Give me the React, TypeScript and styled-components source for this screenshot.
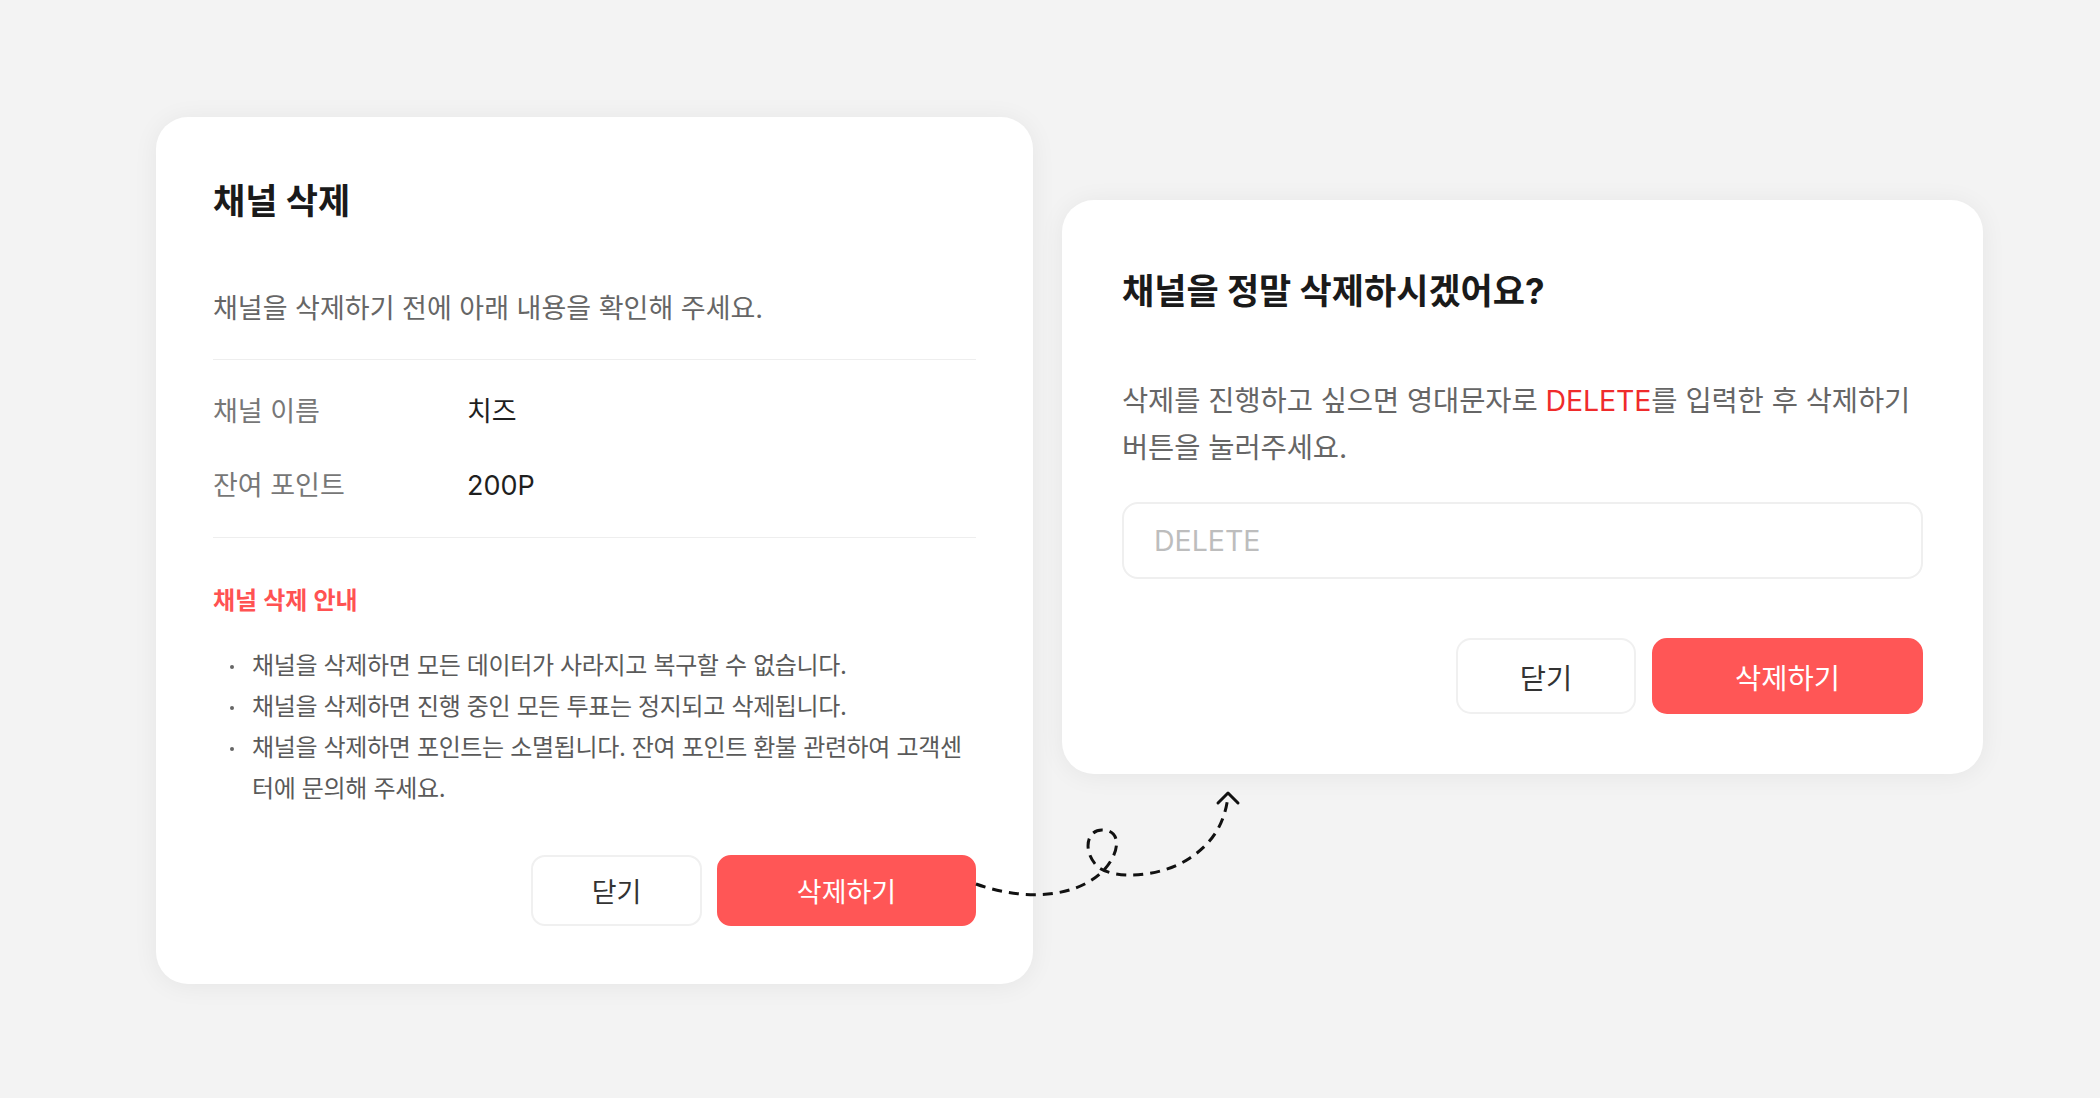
import React from 'react';
import styled, { createGlobalStyle } from 'styled-components';

const GlobalStyle = createGlobalStyle`
  html, body {
    margin: 0;
    padding: 0;
    background: #f3f3f3;
  }
  body {
    font-family: Inter, "Noto Sans CJK KR", sans-serif;
    -webkit-font-smoothing: antialiased;
  }
  * {
    box-sizing: border-box;
  }
`;

const Page = styled.div`
  position: relative;
  width: 2100px;
  height: 1098px;
  display: flex;
  align-items: flex-start;
  gap: 29px;
  padding: 117px 0 0 156px;
  overflow: hidden;
`;

const Card = styled.section<{ $width: number; $pad: string; $offset?: number }>`
  width: ${p => p.$width}px;
  margin-top: ${p => p.$offset || 0}px;
  padding: ${p => p.$pad};
  background: #fff;
  border-radius: 32px;
  box-shadow: 0 2px 26px rgba(0, 0, 0, 0.06);
  display: flex;
  flex-direction: column;
`;

const Title = styled.h2`
  margin: 0;
  font-size: 35px;
  font-weight: 700;
  line-height: 48px;
  color: #1a1a1a;
`;

const Subtitle = styled.p`
  margin: 66px 0 0;
  font-size: 27px;
  line-height: 36px;
  color: #666;
`;

const InfoList = styled.div`
  margin-top: 32px;
  padding: 34px 0 33px;
  border-top: 1px solid #eeeeee;
  border-bottom: 1px solid #eeeeee;
  display: flex;
  flex-direction: column;
  gap: 38px;
`;

const InfoRow = styled.div`
  display: grid;
  grid-template-columns: 254px 1fr;
  font-size: 27px;
  line-height: 36px;
`;

const Label = styled.span`
  color: #777;
`;

const Value = styled.span`
  color: #1f1f1f;
`;

const NoticeTitle = styled.h3`
  margin: 47px 0 0;
  font-size: 24px;
  font-weight: 600;
  line-height: 32px;
  color: #ff5252;
`;

const NoticeList = styled.ul`
  margin: 28px 0 0;
  padding: 0;
  list-style: none;
`;

const NoticeItem = styled.li`
  display: flex;
  align-items: flex-start;
  font-size: 24px;
  line-height: 41px;
  letter-spacing: -0.35px;
  color: #5a5a5a;
`;

const Dot = styled.span`
  flex: none;
  width: 4px;
  height: 4px;
  margin: 20px 18px 0 17px;
  border-radius: 50%;
  background: #666;
`;

const Body = styled.p`
  margin: 62px 0 0;
  font-size: 28.5px;
  line-height: 47px;
  letter-spacing: -0.1px;
  color: #666;
`;

const Keyword = styled.span`
  color: #ef2b2b;
`;

const Field = styled.input`
  margin-top: 31px;
  width: 100%;
  height: 77px;
  padding: 0 30px;
  border: 2px solid #efefef;
  border-radius: 16px;
  outline: none;
  font-family: inherit;
  font-size: 28.5px;
  color: #222;
  background: #fff;
  &::placeholder {
    color: #bdbdbd;
  }
`;

const ButtonRow = styled.div<{ $gap: number; $top: number }>`
  display: flex;
  justify-content: flex-end;
  gap: ${p => p.$gap}px;
  margin-top: ${p => p.$top}px;
`;

const Button = styled.button<{ $w: number; $h: number; $size: number; $danger?: boolean }>`
  width: ${p => p.$w}px;
  height: ${p => p.$h}px;
  border-radius: ${p => Math.round(p.$h * 0.2)}px;
  border: 2px solid ${p => (p.$danger ? '#ff5656' : '#f0f0f0')};
  background: ${p => (p.$danger ? '#ff5656' : '#fff')};
  color: ${p => (p.$danger ? '#fff' : '#333')};
  font-family: inherit;
  font-size: ${p => p.$size}px;
  cursor: pointer;
`;

const Overlay = styled.svg`
  position: absolute;
  left: 0;
  top: 0;
  pointer-events: none;
`;

const notices = [
  '채널을 삭제하면 모든 데이터가 사라지고 복구할 수 없습니다.',
  '채널을 삭제하면 진행 중인 모든 투표는 정지되고 삭제됩니다.',
  '채널을 삭제하면 포인트는 소멸됩니다. 잔여 포인트 환불 관련하여 고객센터에 문의해 주세요.'
];

const DashedArrow = () => (
  <Overlay width="2100" height="1098" viewBox="0 0 2100 1098">
    <path
      d="M 976 884 C 1020 900, 1075 900, 1104 870 C 1121 851, 1121 830, 1102 830 C 1086 830, 1083 852, 1097 866 C 1112 880, 1160 878, 1190 858 C 1214 842, 1225 822, 1228 796"
      fill="none"
      stroke="#111"
      strokeWidth="3"
      strokeDasharray="10 7"
    />
    <path
      d="M 1218 803 L 1228 793 L 1238 803"
      fill="none"
      stroke="#111"
      strokeWidth="3"
      strokeLinecap="round"
      strokeLinejoin="round"
    />
  </Overlay>
);

export default function App() {
  return (
    <>
      <GlobalStyle />
      <Page>
        <Card $width={877} $pad="60px 57px 58px">
          <Title>채널 삭제</Title>
          <Subtitle>채널을 삭제하기 전에 아래 내용을 확인해 주세요.</Subtitle>
          <InfoList>
            <InfoRow>
              <Label>채널 이름</Label>
              <Value>치즈</Value>
            </InfoRow>
            <InfoRow>
              <Label>잔여 포인트</Label>
              <Value>200P</Value>
            </InfoRow>
          </InfoList>
          <NoticeTitle>채널 삭제 안내</NoticeTitle>
          <NoticeList>
            {notices.map(text => (
              <NoticeItem key={text}>
                <Dot />
                <span>{text}</span>
              </NoticeItem>
            ))}
          </NoticeList>
          <ButtonRow $gap={15} $top={46}>
            <Button $w={171} $h={71} $size={27}>닫기</Button>
            <Button $w={259} $h={71} $size={27} $danger>삭제하기</Button>
          </ButtonRow>
        </Card>

        <Card $width={921} $pad="67px 60px 60px" $offset={83}>
          <Title>채널을 정말 삭제하시겠어요?</Title>
          <Body>
            삭제를 진행하고 싶으면 영대문자로 <Keyword>DELETE</Keyword>를 입력한 후 삭제하기
            버튼을 눌러주세요.
          </Body>
          <Field placeholder="DELETE" />
          <ButtonRow $gap={16} $top={59}>
            <Button $w={180} $h={76} $size={28.5}>닫기</Button>
            <Button $w={271} $h={76} $size={28.5} $danger>삭제하기</Button>
          </ButtonRow>
        </Card>

        <DashedArrow />
      </Page>
    </>
  );
}
